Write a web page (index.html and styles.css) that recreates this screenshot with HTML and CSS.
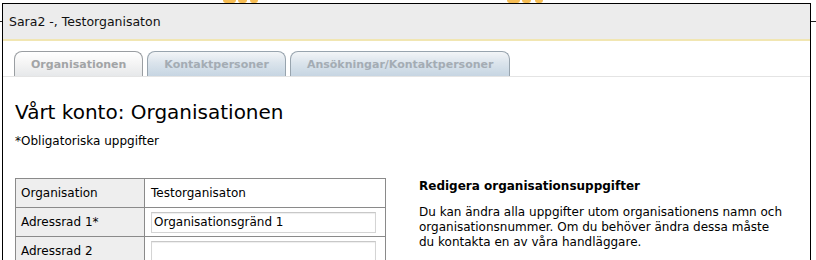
FILE: index.html
```html
<!DOCTYPE html>
<html lang="sv">
<head>
<meta charset="utf-8">
<title>Vårt konto: Organisationen</title>
<link rel="stylesheet" href="styles.css">
</head>
<body>
<div class="page">
  <div class="page-header">
    <span class="logo-bit b1"></span><span class="logo-bit b2"></span><span class="logo-bit b3"></span>
    <span class="logo-bit b4"></span><span class="logo-bit b5"></span><span class="logo-bit b6"></span>
  </div>
</div>
<div class="dialog">
  <div class="titlebar">Sara2 -, Testorganisaton</div>
  <div class="tabbar">
    <a class="tab active">Organisationen</a>
    <a class="tab">Kontaktpersoner</a>
    <a class="tab">Ansökningar/Kontaktpersoner</a>
  </div>
  <div class="content">
    <h1 class="heading">Vårt konto: Organisationen</h1>
    <p class="required-note">*Obligatoriska uppgifter</p>
    <div class="columns">
      <table class="form-table">
        <tr>
          <th>Organisation</th>
          <td>Testorganisaton</td>
        </tr>
        <tr>
          <th>Adressrad 1*</th>
          <td><input class="field" type="text" value="Organisationsgränd 1"></td>
        </tr>
        <tr>
          <th>Adressrad 2</th>
          <td><input class="field" type="text" value=""></td>
        </tr>
      </table>
      <div class="aside">
        <h2 class="aside-title">Redigera organisationsuppgifter</h2>
        <p class="aside-text">Du kan ändra alla uppgifter utom organisationens namn och organisationsnummer. Om du behöver ändra dessa måste du kontakta en av våra handläggare.</p>
      </div>
    </div>
  </div>
</div>
</body>
</html>
```
FILE: styles.css
```css
html, body {
  margin: 0;
  padding: 0;
  background: #ffffff;
  overflow: hidden;
}
body {
  font-family: "DejaVu Sans", Verdana, sans-serif;
  font-size: 12px;
  color: #000;
  width: 816px;
  height: 260px;
  position: relative;
}
.page {
  height: 260px;
}
.page-header {
  position: relative;
  height: 21px;
  border-bottom: 1px solid #222;
}
.logo-bit {
  position: absolute;
  top: 0;
  height: 3px;
  background: #f6bd54;
  border-radius: 0 0 3px 3px;
}
.b1 { left: 223px; width: 13px; }
.b2 { left: 238px; width: 9px; }
.b3 { left: 250px; width: 8px; }
.b4 { left: 507px; width: 13px; }
.b5 { left: 522px; width: 9px; }
.b6 { left: 535px; width: 8px; }

.dialog {
  position: absolute;
  left: 2px;
  top: 3px;
  width: 807px;
  height: 256px;
  overflow: hidden;
  border: 1px solid #000;
  background: #fff;
}
.titlebar {
  height: 35px;
  background: #ececec;
  border-bottom: 2px solid #f1e6b2;
  display: flex;
  align-items: center;
  padding-left: 6px;
  font-size: 12.5px;
  color: #111;
}
.tabbar {
  margin-top: 10px;
  display: flex;
  gap: 4px;
  padding-left: 11px;
  border-bottom: 1px solid #e4e4e4;
}
.tab {
  display: block;
  height: 25px;
  line-height: 26px;
  padding: 0 16px;
  border: 1px solid #98a4ae;
  border-bottom: none;
  border-radius: 8px 8px 0 0;
  background: linear-gradient(#f3f5f7, #dbe4ec 45%, #c6d5e2);
  font-weight: bold;
  font-size: 11px;
  color: #a4acb4;
  box-sizing: border-box;
}
.tab.active {
  background: linear-gradient(#ffffff, #f4f4f4 50%, #e6e8ea);
  border-color: #9a9ea2;
  color: #a2a4a6;
}
.content {
  padding: 0 12px;
}
.heading {
  margin: 23px 0 0;
  font-size: 20px;
  line-height: 24px;
  font-weight: normal;
  color: #000;
}
.required-note {
  margin: 10px 0 0;
  line-height: 15px;
}
.columns {
  display: flex;
  align-items: flex-start;
  margin-top: 29px;
}
.form-table {
  border-collapse: collapse;
  width: 371px;
  border: 1px solid #8a8a8a;
}
.form-table th,
.form-table td {
  border: 1px solid #8a8a8a;
  height: 29px;
  padding: 0 5px;
  text-align: left;
  font-weight: normal;
  vertical-align: middle;
  box-sizing: border-box;
}
.form-table th {
  width: 129px;
  background: #eeeeee;
}
.form-table td {
  padding: 0 9px 0 6px;
}
.field {
  display: block;
  width: 225px;
  height: 21px;
  box-sizing: border-box;
  border: 1px solid #d4d4d4;
  border-top-color: #c8c8c8;
  box-shadow: inset 0 1px 1px #eee;
  padding: 0 2px;
  font-family: "DejaVu Sans", Verdana, sans-serif;
  font-size: 12px;
  color: #000;
  background: #fff;
}
.aside {
  margin-left: 33px;
  width: 368px;
}
.aside-title {
  margin: 1px 0 0;
  font-size: 12px;
  line-height: 15px;
  font-weight: bold;
}
.aside-text {
  margin: 11px 0 0;
  line-height: 15px;
}
```
